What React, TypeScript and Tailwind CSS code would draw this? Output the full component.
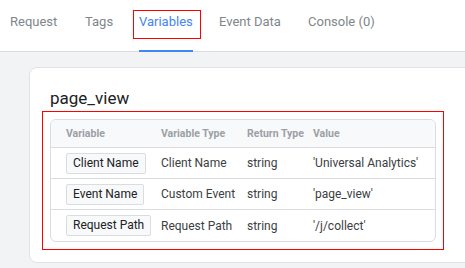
import React from 'react';

const tabs = [
  { label: 'Request', w: 'w-[75px]' },
  { label: 'Tags', w: 'w-[54px]' },
  { label: 'Variables', w: 'w-[80px]' },
  { label: 'Event Data', w: 'w-[89px]' },
  { label: 'Console (0)', w: 'w-[80px]' },
];

const rows = [
  { name: 'Client Name', type: 'Client Name', ret: 'string', value: "'Universal Analytics'" },
  { name: 'Event Name', type: 'Custom Event', ret: 'string', value: "'page_view'" },
  { name: 'Request Path', type: 'Request Path', ret: 'string', value: "'/j/collect'" },
];

const cols = 'grid grid-cols-[110px_86px_66px_1fr]';

export default function App() {
  return (
    <div className="w-[465px] h-[268px] overflow-hidden bg-[#f1f3f4] font-['Roboto',sans-serif]">
      {/* Tabs */}
      <div className="h-[52px] bg-white border-b border-[#dadce0] flex pl-[10px]">
        {tabs.map((tab) => {
          const active = tab.label === 'Variables';
          return (
            <div key={tab.label} className={`${tab.w} shrink-0 h-[52px]`}>
              <span
                className={
                  active
                    ? 'relative inline-block h-[52px] pt-[14px] text-[13px] leading-4 text-[#4285f4] border-b-2 border-[#4285f4]'
                    : 'relative inline-block h-[52px] pt-[14px] text-[13px] leading-4 text-[#80868b]'
                }
              >
                {tab.label}
                {active && (
                  <span className="absolute left-[-6px] top-[10px] w-[68px] h-[29px] border border-[#ff0000]" />
                )}
              </span>
            </div>
          );
        })}
      </div>

      {/* Card */}
      <div className="mt-[15px] ml-[29px] w-[460px] h-[196px] bg-white border border-[#e0e2e5] rounded-[8px] pt-[20px] pl-[20px]">
        <h2 className="text-[17px] leading-5 text-[#202124] mb-[11px]">page_view</h2>

        <div className="relative w-[386px]">
          <span className="absolute -inset-[8px] border border-[#ff0000]" />
          <div className="border border-[#dadce0] rounded-[6px] overflow-hidden">
            <div className={`${cols} h-[28px] items-center bg-[#f8f9fa] border-b border-[#dadce0] text-[10.5px] font-bold text-[#9aa0a6]`}>
              <div className="pl-[15px]">Variable</div>
              <div>Variable Type</div>
              <div>Return Type</div>
              <div>Value</div>
            </div>
            {rows.map((row, i) => (
              <div
                key={row.name}
                className={`${cols} h-[31px] items-center text-[12px] text-[#3c4043] ${i < rows.length - 1 ? 'border-b border-[#dadce0]' : ''}`}
              >
                <div className="pl-[15px]">
                  <span className="inline-block h-[21px] leading-[19px] px-[6px] bg-[#f8f9fa] border border-[#dadce0] rounded-[2px] text-[#202124]">
                    {row.name}
                  </span>
                </div>
                <div>{row.type}</div>
                <div>{row.ret}</div>
                <div>{row.value}</div>
              </div>
            ))}
          </div>
        </div>
      </div>
    </div>
  );
}
